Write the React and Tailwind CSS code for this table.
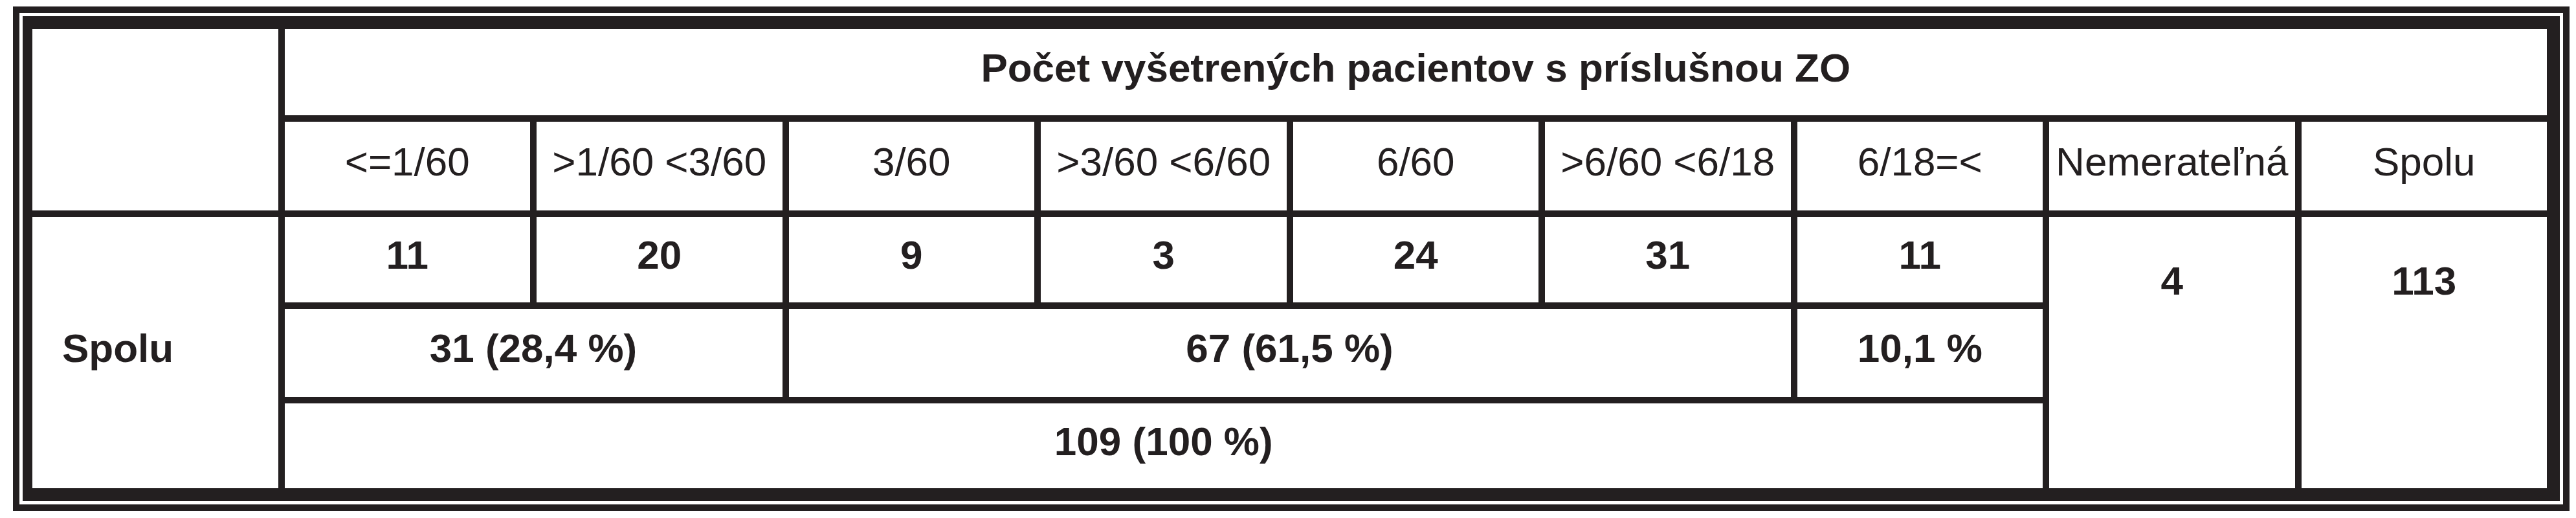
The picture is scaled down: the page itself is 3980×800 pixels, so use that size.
const headers = [
  "<=1/60",
  ">1/60 <3/60",
  "3/60",
  ">3/60 <6/60",
  "6/60",
  ">6/60 <6/18",
  "6/18=<",
  "Nemerateľná",
  "Spolu",
];

const counts = ["11", "20", "9", "3", "24", "31", "11"];

function Cell({ className = "", children }) {
  return (
    <div
      className={`bg-white flex items-center justify-center pb-[15px] whitespace-nowrap ${className}`}
    >
      {children}
    </div>
  );
}

export default function App() {
  return (
    <div className="min-h-[800px] bg-white pt-[10px] pl-[20px] text-[#231f20] font-['Liberation_Sans',Arial,sans-serif] text-[62px] leading-[normal]">
      <div className="w-[3950px] border-[10px] border-[#231f20] p-[5px]">
        <div className="border-[#231f20] border-t-[20px] border-b-[20px] border-l-[15px] border-r-[20px]">
          <div className="grid grid-cols-10 grid-rows-[133px_137px_132px_136px_131px] gap-[10px] bg-[#231f20]">
            {/* row 1 */}
            <Cell className="row-span-2" />
            <Cell className="col-span-9 font-bold">
              Počet vyšetrených pacientov s príslušnou ZO
            </Cell>

            {/* row 2 */}
            {headers.map((h, i) => (
              <Cell key={i}>{h}</Cell>
            ))}

            {/* row 3 */}
            <Cell className="row-span-3 font-bold justify-start pl-[46px]">
              Spolu
            </Cell>
            {counts.map((c, i) => (
              <Cell key={i} className="font-bold">
                {c}
              </Cell>
            ))}
            <Cell className="row-span-3 font-bold items-start pt-[63px] pb-0">
              4
            </Cell>
            <Cell className="row-span-3 font-bold items-start pt-[63px] pb-0">
              113
            </Cell>

            {/* row 4 */}
            <Cell className="col-span-2 font-bold">31 (28,4 %)</Cell>
            <Cell className="col-span-4 font-bold">67 (61,5 %)</Cell>
            <Cell className="font-bold">10,1 %</Cell>

            {/* row 5 */}
            <Cell className="col-span-7 font-bold">109 (100 %)</Cell>
          </div>
        </div>
      </div>
    </div>
  );
}
